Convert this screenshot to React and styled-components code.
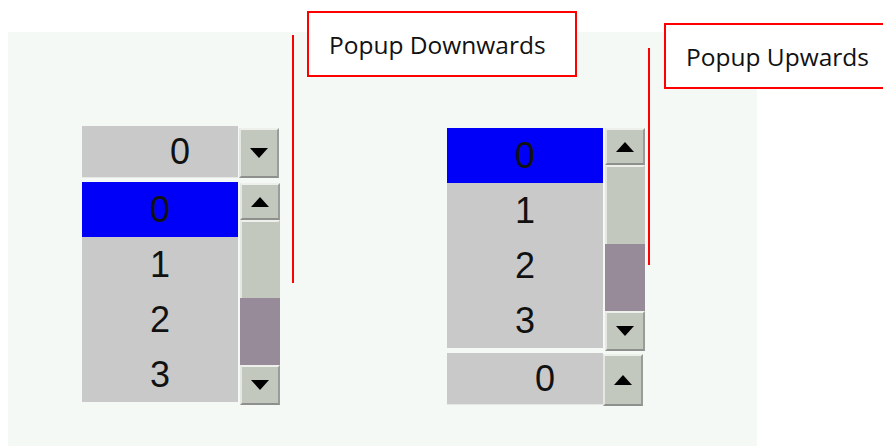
import React from "react";
import styled, { createGlobalStyle, css } from "styled-components";

const GlobalStyle = createGlobalStyle`
  html, body {
    margin: 0;
    padding: 0;
    background: #ffffff;
    overflow: hidden;
  }
`;

const Canvas = styled.div`
  position: relative;
  width: 883px;
  height: 446px;
  overflow: hidden;
`;

const Panel = styled.section`
  margin: 32px 0 0 8px;
  width: 749px;
  height: 414px;
  box-sizing: border-box;
  padding: 94px 0 0 74px;
  background: #f5f9f6;
  display: flex;
  align-items: flex-start;
  gap: 167px;
`;

const Combo = styled.div`
  width: 198px;
  display: flex;
  flex-direction: column;
  gap: ${(props) => props.$gap || 4}px;
  margin-top: ${(props) => props.$offset || 0}px;
`;

const Row = styled.div`
  display: flex;
  align-items: flex-start;
`;

const bevel = css`
  box-sizing: border-box;
  background: #c3c8bf;
  border-top: 2px solid #eef0ec;
  border-left: 2px solid #e4e7e2;
  border-right: 2px solid #9a9c99;
  border-bottom: 2px solid #8e908d;
`;

const digits = css`
  font-family: "Liberation Sans", Arial, sans-serif;
  font-size: 36px;
  color: #111;
`;

const Field = styled.div`
  ${digits};
  width: 156px;
  height: 52px;
  box-sizing: border-box;
  background: #c9c9c9;
  border-bottom: 1px solid #e6e8e5;
  padding-left: 40px;
  display: flex;
  align-items: center;
  justify-content: center;
`;

const ArrowButton = styled.div`
  ${bevel};
  width: ${(props) => props.$w || 39}px;
  height: ${(props) => props.$h || 38}px;
  margin-left: ${(props) => props.$ml || 0}px;
  margin-top: ${(props) => props.$mt || 0}px;
  display: flex;
  align-items: center;
  justify-content: center;
`;

const List = styled.div`
  width: 156px;
  display: flex;
  flex-direction: column;
  background: #c9c9c9;
`;

const Item = styled.div`
  ${digits};
  height: 55px;
  display: flex;
  align-items: center;
  justify-content: center;
  background: ${(props) => (props.$selected ? "#0000f8" : "#c9c9c9")};
`;

const Scrollbar = styled.div`
  width: ${(props) => props.$w || 40}px;
  margin-left: 2px;
  margin-top: ${(props) => props.$mt || 0}px;
  display: flex;
  flex-direction: column;
`;

const Trough = styled.div`
  ${bevel};
  height: ${(props) => props.$h}px;
  border-right-color: #c3c8bf;
  border-bottom: none;
`;

const Thumb = styled.div`
  height: ${(props) => props.$h}px;
  background: #988b99;
`;

const Callout = styled.div`
  position: absolute;
  left: ${(props) => props.$x}px;
  top: ${(props) => props.$y}px;
  width: ${(props) => props.$w}px;
  height: 66px;
  box-sizing: border-box;
  border: 2px solid #ff0000;
  background: #ffffff;
  padding-left: 20px;
  display: flex;
  align-items: center;
  font-family: "Open Sans", "Noto Sans", sans-serif;
  font-size: 24.5px;
  color: #111;
`;

const Leader = styled.div`
  position: absolute;
  left: ${(props) => props.$x}px;
  top: ${(props) => props.$y}px;
  width: 2px;
  height: ${(props) => props.$h}px;
  background: #ff0000;
`;

const Arrow = ({ up }) => (
  <svg width="18" height="10" viewBox="0 0 18 10">
    <polygon points={up ? "9,0 18,10 0,10" : "0,0 18,0 9,10"} fill="#000" />
  </svg>
);

const items = ["0", "1", "2", "3"];

const Popup = ({ thumbTop, thumbH, sbOffset }) => (
  <Row>
    <List>
      {items.map((v, i) => (
        <Item key={v} $selected={i === 0}>
          {v}
        </Item>
      ))}
    </List>
    <Scrollbar $mt={sbOffset}>
      <ArrowButton $w={40} $h={37}>
        <Arrow up />
      </ArrowButton>
      <Trough $h={thumbTop} />
      <Thumb $h={thumbH} />
      <ArrowButton $w={40} $h={40}>
        <Arrow />
      </ArrowButton>
    </Scrollbar>
  </Row>
);

const Closed = ({ up, ml, mt, h }) => (
  <Row>
    <Field>0</Field>
    <ArrowButton $w={40} $h={h} $ml={ml} $mt={mt}>
      <Arrow up={up} />
    </ArrowButton>
  </Row>
);

export default function App() {
  return (
    <>
      <GlobalStyle />
      <Canvas>
        <Panel>
          <Combo $gap={4}>
            <Closed ml={1} mt={2} h={50} />
            <Popup thumbTop={78} thumbH={67} sbOffset={1} />
          </Combo>
          <Combo $gap={2} $offset={2}>
            <Popup thumbTop={79} thumbH={67} sbOffset={0} />
            <Closed up ml={0} mt={1} h={52} />
          </Combo>
        </Panel>
        <Leader $x={292} $y={35} $h={248} />
        <Leader $x={648} $y={48} $h={217} />
        <Callout $x={307} $y={11} $w={270}>
          Popup Downwards
        </Callout>
        <Callout $x={664} $y={23} $w={240}>
          Popup Upwards
        </Callout>
      </Canvas>
    </>
  );
}
